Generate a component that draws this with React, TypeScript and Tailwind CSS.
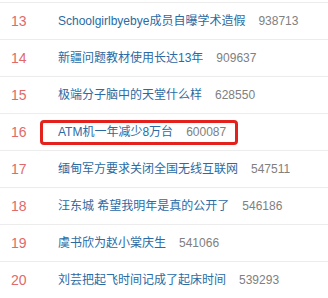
import React from 'react';

interface HotItem {
  rank: number;
  title: string;
  count: string;
  marked?: boolean;
}

const items: HotItem[] = [
  { rank: 13, title: 'Schoolgirlbyebye成员自曝学术造假', count: '938713' },
  { rank: 14, title: '新疆问题教材使用长达13年', count: '909637' },
  { rank: 15, title: '极端分子脑中的天堂什么样', count: '628550' },
  { rank: 16, title: 'ATM机一年减少8万台', count: '600087', marked: true },
  { rank: 17, title: '缅甸军方要求关闭全国无线互联网', count: '547511' },
  { rank: 18, title: '汪东城 希望我明年是真的公开了', count: '546186' },
  { rank: 19, title: '虞书欣为赵小棠庆生', count: '541066' },
  { rank: 20, title: '刘芸把起飞时间记成了起床时间', count: '539293' },
];

const App: React.FC = () => {
  return (
    <div
      className="w-[328px] h-[298px] bg-white overflow-hidden pt-[2px]"
      style={{ fontFamily: '"Liberation Sans", "Noto Sans CJK SC", sans-serif' }}
    >
      {items.map((item) => (
        <div
          key={item.rank}
          className="relative flex items-center h-[37px] border-t border-[#ececec] whitespace-nowrap"
        >
          <span className="w-[58px] pl-[11px] text-[14px] text-[#e06a6a]">{item.rank}</span>
          <span className="text-[12px] text-[#2b6aa3]">{item.title}</span>
          <span className="ml-[13px] text-[12px] text-[#808080]">{item.count}</span>
          {item.marked && (
            <div className="absolute left-[40px] top-[6px] w-[198px] h-[25px] border-[3px] border-[#e3211d] rounded-[4px]" />
          )}
        </div>
      ))}
    </div>
  );
};

export default App;
